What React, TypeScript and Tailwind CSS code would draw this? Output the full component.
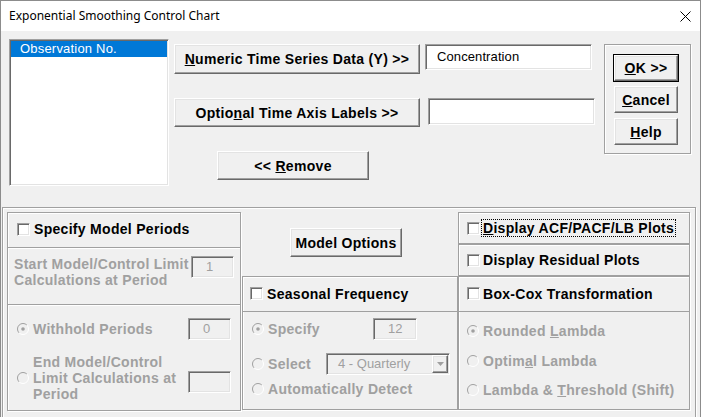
import React from "react";

const etched = "border border-[#a0a0a0] shadow-[inset_1px_1px_0_#fff,1px_1px_0_#fff]";
const sunken =
  "border border-t-[#a0a0a0] border-l-[#a0a0a0] border-b-white border-r-white shadow-[inset_1px_1px_0_#696969,inset_-1px_-1px_0_#e3e3e3]";
const raised =
  "border border-t-white border-l-white border-b-[#696969] border-r-[#696969] shadow-[inset_-1px_-1px_0_#a0a0a0,inset_1px_1px_0_#e3e3e3] bg-[#f0f0f0]";

function Btn({ className = "", children }: { className?: string; children: React.ReactNode }) {
  return (
    <div className={`${raised} flex items-center justify-center text-[14px] font-bold tracking-[0.3px] leading-none text-black ${className}`}>
      {children}
    </div>
  );
}

function Check() {
  return <div className={`w-[13px] h-[13px] shrink-0 bg-white ${sunken}`} />;
}

function Radio({ on = false }: { on?: boolean }) {
  return (
    <svg width="12" height="12" viewBox="0 0 12 12" className="shrink-0">
      <circle cx="6" cy="6" r="5.5" fill="#f0f0f0" />
      <path d="M2.1 9.9 A5.5 5.5 0 0 1 9.9 2.1" fill="none" stroke="#a0a0a0" strokeWidth="1" />
      <path d="M9.9 2.1 A5.5 5.5 0 0 1 2.1 9.9" fill="none" stroke="#ffffff" strokeWidth="1" />
      {on && <circle cx="6" cy="6" r="1.8" fill="#a0a0a0" />}
    </svg>
  );
}

function Input({ className = "", value = "" }: { className?: string; value?: string }) {
  return (
    <div className={`${sunken} bg-[#f0f0f0] h-[22px] w-[43px] shrink-0 flex items-center text-[13px] text-[#a0a0a0] ${className}`}>
      <span className="pl-[14px]">{value}</span>
    </div>
  );
}

const grayLabel = "text-[14px] font-bold tracking-[0.3px] text-[#a0a0a0] leading-[16px]";
const blackLabel = "text-[14px] font-bold tracking-[0.3px] text-black leading-[16px]";

export default function App() {
  return (
    <div className="w-[701px] h-[417px] overflow-hidden border border-b-0 border-[#8c8c8c] bg-[#f0f0f0] font-['Liberation_Sans',Arial,sans-serif] text-black">
      {/* Title bar */}
      <div className="h-[30px] bg-white flex items-center pl-[8px]">
        <span className="text-[12px] font-['Noto_Sans','Open_Sans',sans-serif] text-black">
          Exponential Smoothing Control Chart
        </span>
        <svg className="ml-auto mr-[9px]" width="11" height="11" viewBox="0 0 11 11">
          <path d="M0.5 0.5 L10.5 10.5 M10.5 0.5 L0.5 10.5" stroke="#000" strokeWidth="1" />
        </svg>
      </div>

      {/* Top section */}
      <div className="flex items-start pl-[8px] pt-[8px]">
        <div className={`w-[160px] h-[147px] bg-white ${sunken} p-[1px]`}>
          <div className="h-[16px] bg-[#0078d7] text-white text-[13px] tracking-[0.2px] leading-[16px] pl-[9px]">Observation No.</div>
        </div>

        <div className="ml-[5px] pt-[5px] flex flex-col">
          <div className="flex items-start">
            <Btn className="w-[246px] h-[30px]">
              <span>
                <u>N</u>umeric Time Series Data (Y) &gt;&gt;
              </span>
            </Btn>
            <div className={`ml-[5px] w-[167px] h-[26px] bg-white ${sunken} text-[13px] tracking-[0.1px] pl-[11px] pt-[4px] leading-[16px]`}>
              Concentration
            </div>
          </div>
          <div className="flex items-start mt-[24px]">
            <Btn className="w-[246px] h-[29px]">
              <span>
                Optio<u>n</u>al Time Axis Labels &gt;&gt;
              </span>
            </Btn>
            <div className={`ml-[8px] w-[167px] h-[27px] bg-white ${sunken}`} />
          </div>
          <Btn className="mt-[24px] ml-[43px] w-[152px] h-[29px]">
            <span>
              &lt;&lt; <u>R</u>emove
            </span>
          </Btn>
        </div>

        <div className={`ml-[9px] mt-[5px] w-[87px] h-[110px] ${etched} pl-[8px] pt-[9px] flex flex-col items-start`}>
          <div className="border border-black">
            <Btn className="w-[64px] h-[26px]">
              <span>
                <u>O</u>K &gt;&gt;
              </span>
            </Btn>
          </div>
          <Btn className="ml-[1px] mt-[4px] w-[64px] h-[27px]">
            <span>
              <u>C</u>ancel
            </span>
          </Btn>
          <Btn className="ml-[1px] mt-[5px] w-[64px] h-[27px]">
            <span>
              <u>H</u>elp
            </span>
          </Btn>
        </div>
      </div>

      {/* Bottom frame */}
      <div className={`mt-[21px] ml-[1px] w-[694px] h-[215px] ${etched} pl-[4px] pt-[4px] flex items-start`}>
        {/* Left group */}
        <div className={`w-[234px] h-[199px] ${etched} flex flex-col`}>
          <div className="h-[35px] border-b border-[#a0a0a0] flex items-center pl-[9px] pb-[2px]">
            <Check />
            <span className={`ml-[4px] ${blackLabel}`}>Specify Model Periods</span>
          </div>
          <div className="h-[57px] border-b border-[#a0a0a0] flex items-start justify-between pl-[6px] pr-[6px] pt-[8px] shadow-[inset_0_1px_0_#fff]">
            <div className={grayLabel}>
              Start Model/Control Limit
              <br />
              Calculations at Period
            </div>
            <Input value="1" />
          </div>
          <div className="flex flex-col shadow-[inset_0_1px_0_#fff]">
            <div className="mt-[13px] h-[22px] flex items-center pl-[9px] pr-[9px]">
              <Radio on />
              <span className={`ml-[4px] ${grayLabel}`}>Withhold Periods</span>
              <Input className="ml-auto" value="0" />
            </div>
            <div className="mt-[14px] flex items-center pl-[9px] pr-[9px]">
              <Radio />
              <span className={`ml-[4px] ${grayLabel}`}>
                End Model/Control
                <br />
                Limit Calculations at
                <br />
                Period
              </span>
              <Input className="ml-auto self-start mt-[17px] w-[42px]" />
            </div>
          </div>
        </div>

        {/* Middle column */}
        <div className="ml-[1px] w-[216px] flex flex-col">
          <Btn className="ml-[48px] mt-[16px] w-[112px] h-[29px]">Model Options</Btn>
          <div className={`mt-[19px] w-[216px] h-[134px] ${etched} flex flex-col`}>
            <div className="h-[35px] border-b border-[#a0a0a0] flex items-center pl-[7px] pb-[1px]">
              <Check />
              <span className={`ml-[4px] ${blackLabel}`}>Seasonal Frequency</span>
            </div>
            <div className="mt-[6px] h-[22px] flex items-center pl-[9px] pr-[40px]">
              <Radio on />
              <span className={`ml-[4px] ${grayLabel}`}>Specify</span>
              <Input className="ml-auto w-[44px]" value="12" />
            </div>
            <div className="mt-[13px] h-[22px] flex items-center pl-[9px] pr-[7px]">
              <Radio />
              <span className={`ml-[4px] ${grayLabel}`}>Select</span>
              <div className={`ml-auto w-[124px] h-[22px] ${sunken} bg-[#f0f0f0] flex items-center`}>
                <span className="pl-[11px] text-[13px] text-[#a0a0a0]">4 - Quarterly</span>
                <div className={`ml-auto mr-[1px] w-[16px] h-[18px] ${raised} flex items-center justify-center`}>
                  <svg width="7" height="4" viewBox="0 0 7 4">
                    <path d="M0 0 L7 0 L3.5 4 Z" fill="#a0a0a0" />
                  </svg>
                </div>
              </div>
            </div>
            <div className="mt-[4px] h-[20px] flex items-center pl-[9px]">
              <Radio />
              <span className={`ml-[4px] ${grayLabel}`}>Automatically Detect</span>
            </div>
          </div>
        </div>

        {/* Right column */}
        <div className="w-[232px] flex flex-col">
          <div className={`h-[32px] ${etched} flex items-center pl-[8px]`}>
            <Check />
            <span className={`ml-[1px] border border-dotted border-black px-[1px] ${blackLabel}`}>
              <u>D</u>isplay ACF/PACF/LB Plots
            </span>
          </div>
          <div className={`h-[32px] ${etched} flex items-center pl-[8px]`}>
            <Check />
            <span className={`ml-[3px] ${blackLabel}`}>Display Residual Plots</span>
          </div>
          <div className={`h-[134px] ${etched} flex flex-col`}>
            <div className="h-[35px] border-b border-[#a0a0a0] flex items-center pl-[8px] pb-[1px]">
              <Check />
              <span className={`ml-[3px] ${blackLabel}`}>Box-Cox Transformation</span>
            </div>
            <div className="mt-[9px] h-[20px] flex items-center pl-[8px]">
              <Radio on />
              <span className={`ml-[4px] ${grayLabel}`}>
                Rounded <u>L</u>ambda
              </span>
            </div>
            <div className="mt-[10px] h-[20px] flex items-center pl-[8px]">
              <Radio />
              <span className={`ml-[4px] ${grayLabel}`}>
                Optim<u>a</u>l Lambda
              </span>
            </div>
            <div className="mt-[9px] h-[20px] flex items-center pl-[8px]">
              <Radio />
              <span className={`ml-[4px] ${grayLabel}`}>
                Lambda &amp; <u>T</u>hreshold (Shift)
              </span>
            </div>
          </div>
        </div>
      </div>
    </div>
  );
}
